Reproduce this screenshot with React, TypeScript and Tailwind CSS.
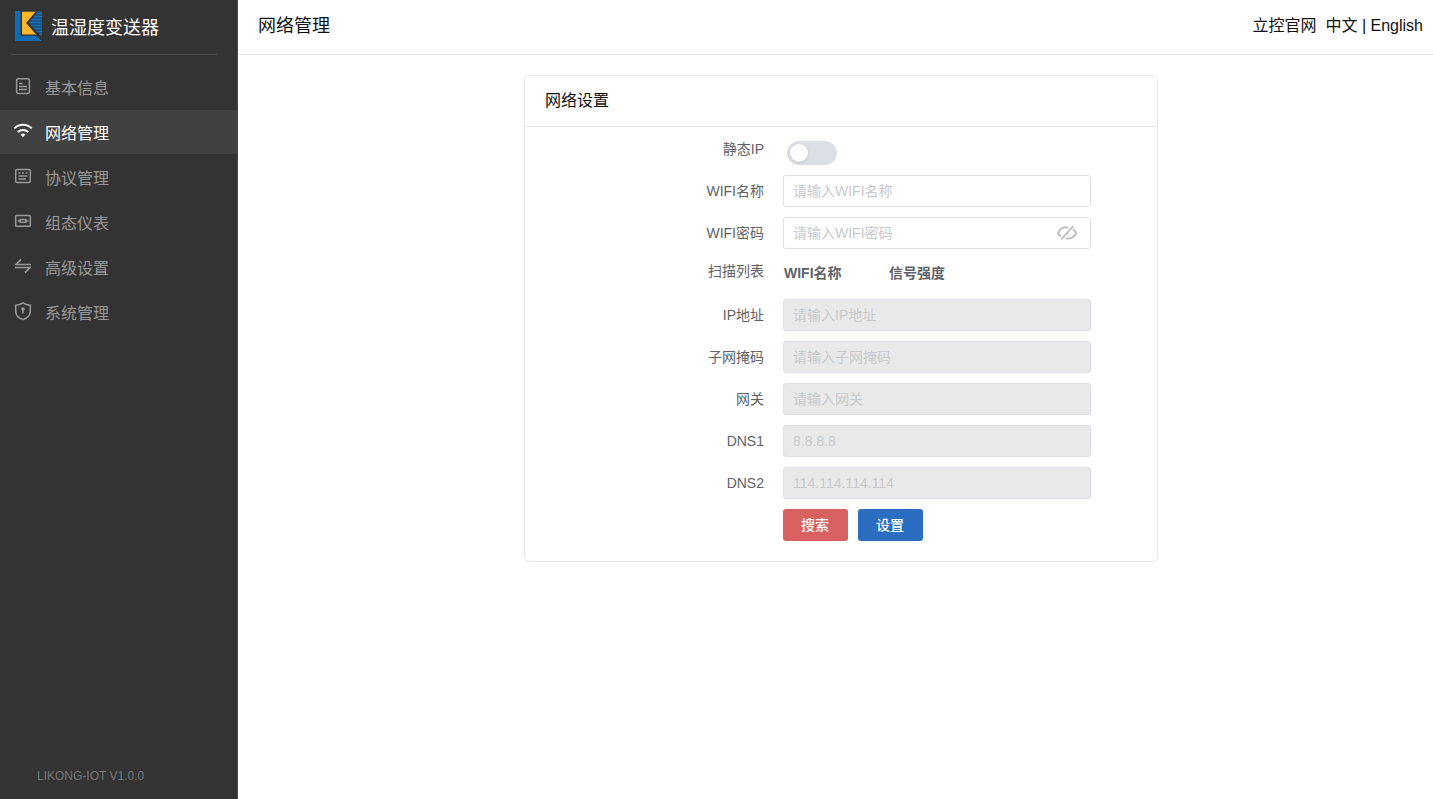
import type { ReactNode } from "react";

interface MenuItem {
  label: string;
  icon: ReactNode;
  active?: boolean;
}

const menu: MenuItem[] = [
  {
    label: "基本信息",
    icon: (
      <>
        <rect x="3.6" y="2.8" width="12.8" height="14.6" rx="1.4" />
        <path d="M6 7.4h3.6M6 10.4h8M6 13.4h8" />
      </>
    ),
  },
  {
    label: "网络管理",
    active: true,
    icon: (
      <>
        <path d="M1.3 7.4C6.2 2.6 13.8 2.6 18.7 7.4" strokeWidth="2" />
        <path d="M4.8 11C7.8 8.3 12.2 8.3 15.2 11" strokeWidth="2" />
        <path d="M7.6 13.4c1.4-1.2 3.4-1.2 4.8 0L10 16.2z" fill="currentColor" stroke="none" />
      </>
    ),
  },
  {
    label: "协议管理",
    icon: (
      <>
        <rect x="2.7" y="3.6" width="14.6" height="12.8" rx="1.2" />
        <path d="M5.5 7h2M9 7h2M12.5 7h2M5.5 10h9M5.5 13h7.5" />
      </>
    ),
  },
  {
    label: "组态仪表",
    icon: (
      <>
        <rect x="2.7" y="4.4" width="14.6" height="10.8" rx="0.8" />
        <rect x="7.2" y="8.5" width="5.6" height="2.8" />
        <path d="M4.5 10h2.5M13 10h2.5" />
      </>
    ),
  },
  {
    label: "高级设置",
    icon: <path d="M18 8.5H3.2L8 3.4M2 11.5h14.8L12 16.6" strokeWidth="1.7" />,
  },
  {
    label: "系统管理",
    icon: (
      <>
        <path d="M10 1.9c2.1 1.6 4.6 2.3 7.3 2.3v6.2c0 4-3.4 6.7-7.3 8.2-3.9-1.5-7.3-4.2-7.3-8.2V4.2c2.7 0 5.2-.7 7.3-2.3z" />
        <circle cx="10" cy="8" r="1.8" fill="currentColor" stroke="none" />
        <path d="M10 8v4.6" strokeWidth="1.6" />
      </>
    ),
  },
];

const disabledFields = [
  { label: "IP地址", placeholder: "请输入IP地址" },
  { label: "子网掩码", placeholder: "请输入子网掩码" },
  { label: "网关", placeholder: "请输入网关" },
  { label: "DNS1", placeholder: "8.8.8.8" },
  { label: "DNS2", placeholder: "114.114.114.114" },
];

function Logo() {
  return (
    <svg width="27" height="30" viewBox="0 0 27 30" className="mb-[2px] shrink-0">
      <path d="M0 0h5.4v24.8H21.5L27 30H0z" fill="#0f6cb5" />
      <path d="M7 .8h14.5L11.8 12l10 11.5H7z" fill="#fbb62c" />
      <path d="M22.5 0H27v26L14 12z" fill="#17558a" />
      <path
        d="M21 2.5h6M18.7 5.5H27M16.3 8.5H27M14 11.5h13M16 14.5h11M18.7 17.5H27M21.4 20.5H27M24 23.5h3"
        stroke="#1a72b6"
      />
      <path d="M22.3 0L12.2 12 27 29" fill="none" stroke="#333333" strokeWidth="1.6" />
    </svg>
  );
}

function Sidebar() {
  return (
    <aside className="flex w-[238px] shrink-0 flex-col border-r border-[#484848] bg-[#333333]">
      <div className="ml-[11px] flex h-[55px] w-[206px] items-center border-b border-[#4b4b4b] pl-1">
        <Logo />
        <span className="ml-[9px] pt-[2px] text-[18px] text-white">温湿度变送器</span>
      </div>
      <nav className="mt-[10px] flex flex-col gap-px">
        {menu.map((item) => (
          <a
            key={item.label}
            className={
              item.active
                ? "flex h-11 items-center bg-[#414141] pl-[13px] text-white"
                : "flex h-11 items-center pl-[13px] text-[#999999]"
            }
          >
            <svg
              width="20"
              height="20"
              viewBox="0 0 20 20"
              fill="none"
              stroke="currentColor"
              strokeWidth="1.5"
              className="mb-[2px]"
            >
              {item.icon}
            </svg>
            <span className="ml-3 pt-1 text-base">{item.label}</span>
          </a>
        ))}
      </nav>
      <div className="mt-auto pb-[15px] pl-[37px] text-xs text-[#777777]">LIKONG-IOT V1.0.0</div>
    </aside>
  );
}

function FormRow({ label, children }: { label: string; children?: ReactNode }) {
  return (
    <div className="flex h-8">
      <label className="w-[239px] shrink-0 text-right leading-8">{label}</label>
      <div className="ml-[19px] flex">{children}</div>
    </div>
  );
}

export default function App() {
  return (
    <div className="flex h-screen bg-white font-['Liberation_Sans','Noto_Sans_CJK_SC',sans-serif]">
      <Sidebar />
      <div className="flex flex-1 flex-col">
        <header className="flex h-[55px] items-center justify-between border-b border-[#e8e8e8] pr-[10px] pb-[3px] pl-5 text-[#111111]">
          <h1 className="pt-[2px] text-[18px]">网络管理</h1>
          <div className="flex text-base">
            <a className="mr-[9px]">立控官网</a>
            <span>中文 | English</span>
          </div>
        </header>

        <main className="ml-[286px] pt-5">
          <section className="h-[487px] w-[634px] rounded-[5px] border border-[#e8e8e8] text-sm text-[#606266]">
            <h2 className="h-[51px] border-b border-[#e8e8e8] pl-5 text-base leading-[50px] text-[#111111]">
              网络设置
            </h2>
            <form className="flex flex-col gap-[10px] pt-[6px]">
              <FormRow label="静态IP">
                <button
                  type="button"
                  role="switch"
                  aria-checked="false"
                  className="mt-2 ml-1 h-6 w-[50px] rounded-full bg-[#dcdfe6] p-[3px]"
                >
                  <span className="block size-[18px] rounded-full bg-white shadow" />
                </button>
              </FormRow>
              <FormRow label="WIFI名称">
                <input
                  className="w-[308px] rounded-[3px] border border-[#dcdfe6] px-[9px] placeholder:text-[#c8c9cc]"
                  placeholder="请输入WIFI名称"
                />
              </FormRow>
              <FormRow label="WIFI密码">
                <div className="flex w-[308px] items-center rounded-[3px] border border-[#dcdfe6] pr-3 pl-[9px]">
                  <input
                    type="password"
                    className="min-w-0 flex-1 placeholder:text-[#c8c9cc]"
                    placeholder="请输入WIFI密码"
                  />
                  <svg
                    width="22"
                    height="16"
                    viewBox="0 0 22 16"
                    fill="none"
                    stroke="#c0c0c0"
                    strokeWidth="1.9"
                  >
                    <path d="M12.2 2.4C7.6 1.8 3.8 4.1 2 8c.8 1.6 1.6 2.7 2.8 3.6" />
                    <path d="M16.9 4.3C18.4 5.1 19.5 6.4 20.2 8c-2 4-5.6 6.1-10.2 5.5" />
                    <path d="M17.3 1.2L5.2 14.4" />
                  </svg>
                </div>
              </FormRow>
              <div className="flex h-[30px]">
                <span className="w-[239px] shrink-0 text-right leading-6">扫描列表</span>
                <div className="ml-5 flex font-bold leading-7">
                  <span className="w-[105px]">WIFI名称</span>
                  <span>信号强度</span>
                </div>
              </div>
              {disabledFields.map((field) => (
                <FormRow key={field.label} label={field.label}>
                  <input
                    disabled
                    className="w-[308px] rounded-[3px] border border-[#dcdfe6] bg-[#e9e9e9] px-[9px] placeholder:text-[#c8c9cc]"
                    placeholder={field.placeholder}
                  />
                </FormRow>
              ))}
              <FormRow label="">
                <button
                  type="button"
                  className="mr-[10px] w-[65px] rounded-[3px] bg-[#d96060] pr-px font-medium text-white"
                >
                  搜索
                </button>
                <button
                  type="button"
                  className="w-[65px] rounded-[3px] bg-[#2b6dc0] pr-px font-medium text-white"
                >
                  设置
                </button>
              </FormRow>
            </form>
          </section>
        </main>
      </div>
    </div>
  );
}
